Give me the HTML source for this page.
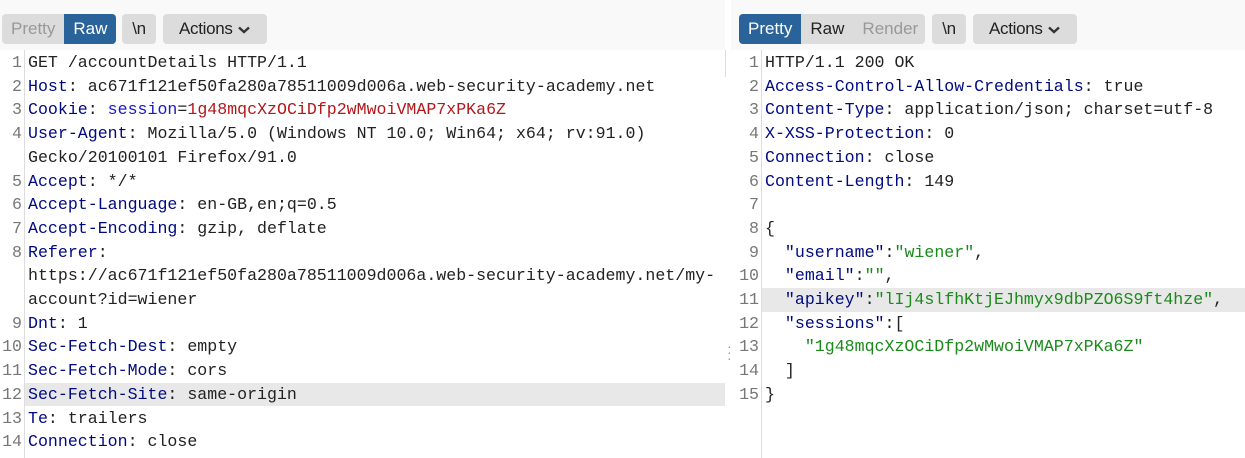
<!DOCTYPE html><html><head><style>
body{margin:0;width:1245px;height:458px;background:#fff;position:relative;overflow:hidden;font-family:"Liberation Sans",sans-serif}
.tb{position:absolute;top:0;height:50px;background:#f9f9f9}
.btn{position:absolute;top:14px;height:30px;line-height:30px;font-size:17px;color:#222;background:#dcdcdc;border-radius:4px;text-align:center;letter-spacing:-0.3px}
.seg{position:absolute;top:14px;height:30px;background:#dcdcdc;border-radius:4px;overflow:hidden;display:flex;font-size:17px;line-height:30px}
.seg span{padding:0 9px;color:#222}
.seg .on{background:#2a6399;color:#fff}
.seg .dis{color:#999}
.code{position:absolute;top:51px;font-family:"Liberation Mono",monospace;font-size:16.6px}
.r{position:absolute;left:0;right:0;height:23.7px;line-height:23.7px;white-space:pre}
.n{position:absolute;text-align:right;color:#777}
.t{position:absolute;color:#222}
.k{color:#000a80}.v{color:#b3171b}.s{color:#1a8a1a}.b{color:#1a1abf}
.hl{background:#e8e8e8}
.gl{position:absolute;top:50px;bottom:0;width:1px;background:#ddd}
svg{vertical-align:middle}
</style></head><body>
<div class="tb" style="left:0;width:725px"></div>
<div class="tb" style="left:731px;width:514px"></div>
<div class="seg" style="left:2px;width:114px"><span class="dis">Pretty</span><span class="on">Raw</span></div>
<div class="btn" style="left:122px;width:34px">\n</div>
<div class="btn" style="left:163px;width:104px">Actions <svg width="14" height="10" viewBox="0 0 14 10"><path d="M2 2.5 L7 7 L12 2.5" stroke="#333" stroke-width="2.4" fill="none"/></svg></div>
<div class="seg" style="left:739px;width:186px"><span class="on">Pretty</span><span>Raw</span><span class="dis">Render</span></div>
<div class="btn" style="left:932px;width:34px">\n</div>
<div class="btn" style="left:973px;width:104px">Actions <svg width="14" height="10" viewBox="0 0 14 10"><path d="M2 2.5 L7 7 L12 2.5" stroke="#333" stroke-width="2.4" fill="none"/></svg></div>
<div class="gl" style="left:24px"></div>
<div class="gl" style="left:761px"></div>
<div class="gl" style="left:725px;bottom:381px"></div>
<div style="position:absolute;left:727px;top:343px;color:#999;font-size:14px;line-height:6px">·<br>·<br>·</div>

<div class="code" style="left:0;width:725px;height:407px;overflow:hidden">
<div class="r" style="top:0"><span class="n" style="width:22px">1</span><span class="t" style="left:28px">GET /accountDetails HTTP/1.1</span></div>
<div class="r" style="top:23.7px"><span class="n" style="width:22px">2</span><span class="t" style="left:28px"><span class="k">Host</span>: ac671f121ef50fa280a78511009d006a.web-security-academy.net</span></div>
<div class="r" style="top:47.4px"><span class="n" style="width:22px">3</span><span class="t" style="left:28px"><span class="k">Cookie</span>: <span class="b">session</span>=<span class="v">1g48mqcXzOCiDfp2wMwoiVMAP7xPKa6Z</span></span></div>
<div class="r" style="top:71.1px"><span class="n" style="width:22px">4</span><span class="t" style="left:28px"><span class="k">User-Agent</span>: Mozilla/5.0 (Windows NT 10.0; Win64; x64; rv:91.0)</span></div>
<div class="r" style="top:94.8px"><span class="t" style="left:28px">Gecko/20100101 Firefox/91.0</span></div>
<div class="r" style="top:118.5px"><span class="n" style="width:22px">5</span><span class="t" style="left:28px"><span class="k">Accept</span>: */*</span></div>
<div class="r" style="top:142.2px"><span class="n" style="width:22px">6</span><span class="t" style="left:28px"><span class="k">Accept-Language</span>: en-GB,en;q=0.5</span></div>
<div class="r" style="top:165.9px"><span class="n" style="width:22px">7</span><span class="t" style="left:28px"><span class="k">Accept-Encoding</span>: gzip, deflate</span></div>
<div class="r" style="top:189.6px"><span class="n" style="width:22px">8</span><span class="t" style="left:28px"><span class="k">Referer</span>:</span></div>
<div class="r" style="top:213.3px"><span class="t" style="left:28px">https://ac671f121ef50fa280a78511009d006a.web-security-academy.net/my-</span></div>
<div class="r" style="top:237px"><span class="t" style="left:28px">account?id=wiener</span></div>
<div class="r" style="top:260.7px"><span class="n" style="width:22px">9</span><span class="t" style="left:28px"><span class="k">Dnt</span>: 1</span></div>
<div class="r" style="top:284.4px"><span class="n" style="width:22px">10</span><span class="t" style="left:28px"><span class="k">Sec-Fetch-Dest</span>: empty</span></div>
<div class="r" style="top:308.1px"><span class="n" style="width:22px">11</span><span class="t" style="left:28px"><span class="k">Sec-Fetch-Mode</span>: cors</span></div>
<div class="r" style="top:331.8px"><span class="hl" style="position:absolute;left:25px;right:0;height:23.7px"></span><span class="n" style="width:22px">12</span><span class="t" style="left:28px"><span class="k">Sec-Fetch-Site</span>: same-origin</span></div>
<div class="r" style="top:355.5px"><span class="n" style="width:22px">13</span><span class="t" style="left:28px"><span class="k">Te</span>: trailers</span></div>
<div class="r" style="top:379.2px"><span class="n" style="width:22px">14</span><span class="t" style="left:28px"><span class="k">Connection</span>: close</span></div>
</div>

<div class="code" style="left:731px;width:514px;height:407px;overflow:hidden">
<div class="r" style="top:0"><span class="n" style="width:28px">1</span><span class="t" style="left:34px">HTTP/1.1 200 OK</span></div>
<div class="r" style="top:23.7px"><span class="n" style="width:28px">2</span><span class="t" style="left:34px"><span class="k">Access-Control-Allow-Credentials</span>: true</span></div>
<div class="r" style="top:47.4px"><span class="n" style="width:28px">3</span><span class="t" style="left:34px"><span class="k">Content-Type</span>: application/json; charset=utf-8</span></div>
<div class="r" style="top:71.1px"><span class="n" style="width:28px">4</span><span class="t" style="left:34px"><span class="k">X-XSS-Protection</span>: 0</span></div>
<div class="r" style="top:94.8px"><span class="n" style="width:28px">5</span><span class="t" style="left:34px"><span class="k">Connection</span>: close</span></div>
<div class="r" style="top:118.5px"><span class="n" style="width:28px">6</span><span class="t" style="left:34px"><span class="k">Content-Length</span>: 149</span></div>
<div class="r" style="top:142.2px"><span class="n" style="width:28px">7</span></div>
<div class="r" style="top:165.9px"><span class="n" style="width:28px">8</span><span class="t" style="left:34px">{</span></div>
<div class="r" style="top:189.6px"><span class="n" style="width:28px">9</span><span class="t" style="left:34px">  <span class="k">"username"</span>:<span class="s">"wiener"</span>,</span></div>
<div class="r" style="top:213.3px"><span class="n" style="width:28px">10</span><span class="t" style="left:34px">  <span class="k">"email"</span>:<span class="s">""</span>,</span></div>
<div class="r" style="top:237px"><span class="hl" style="position:absolute;left:31px;right:0;height:23.7px"></span><span class="n" style="width:28px">11</span><span class="t" style="left:34px">  <span class="k">"apikey"</span>:<span class="s">"lIj4slfhKtjEJhmyx9dbPZO6S9ft4hze"</span>,</span></div>
<div class="r" style="top:260.7px"><span class="n" style="width:28px">12</span><span class="t" style="left:34px">  <span class="k">"sessions"</span>:[</span></div>
<div class="r" style="top:284.4px"><span class="n" style="width:28px">13</span><span class="t" style="left:34px">    <span class="s">"1g48mqcXzOCiDfp2wMwoiVMAP7xPKa6Z"</span></span></div>
<div class="r" style="top:308.1px"><span class="n" style="width:28px">14</span><span class="t" style="left:34px">  ]</span></div>
<div class="r" style="top:331.8px"><span class="n" style="width:28px">15</span><span class="t" style="left:34px">}</span></div>
</div>
</body></html>
